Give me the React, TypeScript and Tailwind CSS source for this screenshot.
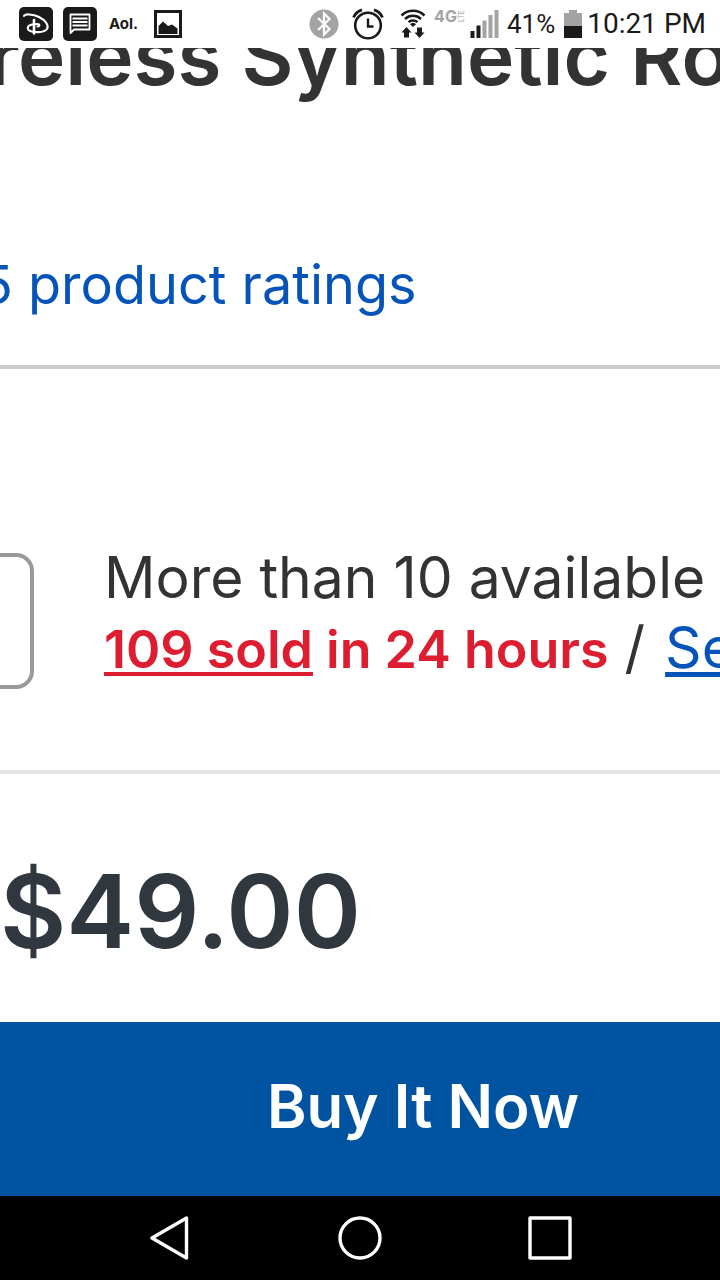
import React from 'react';

interface IconProps {
  className?: string;
}

const DisneyIcon: React.FC<IconProps> = ({ className }) => (
  <svg viewBox="0 0 34 34" className={className} aria-label="Disney">
    <rect width="34" height="34" rx="5" fill="#1a1a1a" />
    <g fill="none" stroke="#fff" strokeLinecap="round">
      <path d="M5 9C5 6.5 14 7 20 10C27 13.5 30 18.5 28 22C25.5 26 13 26 9.5 23C7 19.5 11 17 18 17C21 17 21 19 18.5 19.5" strokeWidth="2.1" />
      <path d="M15 13V26.5" strokeWidth="2.6" />
    </g>
  </svg>
);

const MessageIcon: React.FC<IconProps> = ({ className }) => (
  <svg viewBox="0 0 34 34" className={className} aria-label="Messages">
    <rect width="34" height="34" rx="5" fill="#1a1a1a" />
    <path d="M7.5 7.5H26.5V22.5H11L7.5 26Z" fill="none" stroke="#fff" strokeWidth="1.8" strokeLinejoin="round" />
    <path d="M9.5 11.5H24.5M9.5 15H24.5M9.5 18.5H24.5" stroke="#fff" strokeWidth="1.8" />
  </svg>
);

const PictureIcon: React.FC<IconProps> = ({ className }) => (
  <svg viewBox="0 0 28 28" className={className} aria-label="Screenshot saved">
    <rect x="1.5" y="1.5" width="25" height="25" fill="#fff" stroke="#1a1a1a" strokeWidth="3" />
    <path d="M4.5 24V16L9 11.5L14 16L18 14.5L23.5 18.5V24Z" fill="#1a1a1a" />
  </svg>
);

const BluetoothIcon: React.FC<IconProps> = ({ className }) => (
  <svg viewBox="0 0 30 30" className={className} aria-label="Bluetooth">
    <circle cx="15" cy="15" r="14.5" fill="#a3a3a3" />
    <path d="M9 9L20.5 20L15 25.5V4.5L20.5 10L9 21" fill="none" stroke="#fff" strokeWidth="2.2" />
  </svg>
);

const AlarmIcon: React.FC<IconProps> = ({ className }) => (
  <svg viewBox="0 0 32 32" className={className} aria-label="Alarm">
    <g fill="none" stroke="#1a1a1a">
      <circle cx="16" cy="17.5" r="12.8" strokeWidth="2.6" />
      <path d="M16 10.5V18.5H21.5" strokeWidth="2.4" />
      <path d="M1.5 9.5C3 6 6 3 10 1.8M30.5 9.5C29 6 26 3 22 1.8" strokeWidth="2.8" />
    </g>
  </svg>
);

const WifiIcon: React.FC<IconProps> = ({ className }) => (
  <svg viewBox="0 0 26 30" className={className} aria-label="Wi-Fi">
    <g fill="none" stroke="#1a1a1a" strokeWidth="2.5">
      <path d="M1.5 6.5C8 .3 18 .3 24.5 6.5" />
      <path d="M5 10C9.5 5.8 16.5 5.8 21 10" />
      <path d="M8.5 13.2C11 10.8 15 10.8 17.5 13.2" />
    </g>
    <path d="M10 15.2C11.5 13.6 14.5 13.6 16 15.2L13 18Z" fill="#1a1a1a" />
    <path d="M6.5 18L11.5 23.5H9V28.5H4V23.5H1.5ZM19.5 29L14.5 23.5H17V18.5H22V23.5H24.5Z" fill="#1a1a1a" />
  </svg>
);

const SignalIcon: React.FC<IconProps> = ({ className }) => (
  <svg viewBox="0 0 30 28" className={className} aria-label="Signal">
    <path d="M.5 21H4.5V28H.5ZM6.5 15.5H10.5V28H6.5Z" fill="#1a1a1a" />
    <path d="M12.5 10.5H16.5V28H12.5ZM18.5 5H22.5V28H18.5ZM24.5 0H28.5V28H24.5Z" fill="#a3a3a3" />
  </svg>
);

const BatteryIcon: React.FC<IconProps> = ({ className }) => (
  <svg viewBox="0 0 20 28" className={className} aria-label="Battery">
    <path d="M6 0H14V3H19V16H1V3H6Z" fill="#a3a3a3" />
    <path d="M1 16H19V28H1Z" fill="#1a1a1a" />
  </svg>
);

const StatusBar: React.FC = () => (
  <header className="flex h-12 shrink-0 items-center bg-white pr-[14px] pl-[19px] font-[Roboto,sans-serif] text-[#1a1a1a]">
    <DisneyIcon className="h-[34px] w-[34px]" />
    <MessageIcon className="ml-[10px] h-[34px] w-[34px]" />
    <span className="ml-3 font-[Inter,sans-serif] text-[15px] leading-5 font-bold">Aol.</span>
    <PictureIcon className="ml-4 h-7 w-7" />
    <div className="ml-auto flex items-center">
      <BluetoothIcon className="h-[30px] w-[30px]" />
      <AlarmIcon className="ml-[13px] h-8 w-8" />
      <WifiIcon className="ml-4 h-[30px] w-[26px]" />
      <span className="mb-4 ml-2 flex items-center font-[Inter,sans-serif] text-[#a3a3a3]">
        <span className="text-[16px] leading-4 font-bold">4G</span>
        <span className="rotate-180 text-[7px] leading-[9px] [writing-mode:vertical-rl]">LTE</span>
      </span>
      <SignalIcon className="ml-1 h-7 w-[30px]" />
      <span className="ml-[7px] text-[26px] leading-8">41%</span>
      <BatteryIcon className="ml-2 h-7 w-5" />
      <span className="ml-1 text-[28px] leading-8">10:21 PM</span>
    </div>
  </header>
);

const NavBar: React.FC = () => (
  <nav className="grid h-[84px] shrink-0 grid-cols-3 bg-black px-[75px]">
    <button type="button" aria-label="Back" className="flex items-center justify-center">
      <svg viewBox="0 0 44 44" className="h-11 w-11" fill="none" stroke="#fff" strokeWidth="3.4" strokeLinejoin="round">
        <path d="M38.5 2V42L4 22Z" />
      </svg>
    </button>
    <button type="button" aria-label="Home" className="flex items-center justify-center">
      <svg viewBox="0 0 44 44" className="h-11 w-11" fill="none" stroke="#fff" strokeWidth="3.4">
        <circle cx="22" cy="22" r="20" />
      </svg>
    </button>
    <button type="button" aria-label="Recent apps" className="flex items-center justify-center">
      <svg viewBox="0 0 44 44" className="h-11 w-11" fill="none" stroke="#fff" strokeWidth="3.4" strokeLinejoin="round">
        <rect x="2" y="2" width="40" height="40" />
      </svg>
    </button>
  </nav>
);

export default function App() {
  return (
    <div className="flex min-h-screen flex-col bg-white font-[Inter,sans-serif] text-[#333]">
      <StatusBar />
      {/* Zoomed-in listing, cut off on both sides */}
      <main className="flex flex-1 flex-col overflow-hidden whitespace-nowrap">
        <section className="border-b-4 border-[#ccc] pb-12">
          <h1 className="-mt-7 -ml-3 text-[80px] leading-[72px] font-semibold">reless Synthetic Ro</h1>
          <a href="#ratings" className="mt-[161px] -ml-5 block text-[54px] leading-[64px] text-[#0654ba]">
            5 product ratings
          </a>
        </section>

        <section className="flex items-start border-b-4 border-[#e5e5e5] pt-[174px] pb-[81px]">
          <input
            type="text"
            aria-label="Quantity"
            className="mt-[10px] -ml-16 h-[136px] w-[98px] shrink-0 rounded-[18px] border-4 border-[#999] bg-white"
          />
          <div className="ml-[70px] text-[57px] leading-[70px]">
            <p>More than 10 available</p>
            <p>
              <span className="text-[52px] font-semibold text-[#dd1e31]">
                <a href="#sold" className="underline decoration-[4px] underline-offset-[4px] [text-decoration-skip-ink:none]">109 sold</a> in 24 hours
              </span>{' '}
              <span className="mr-1">/</span>{' '}
              <a href="#similar" className="text-[#0654ba] underline decoration-[5px] underline-offset-[4px] [text-decoration-skip-ink:none]">Se</a>
            </p>
          </div>
        </section>

        <p className="pt-[73px] pb-[47px] text-[102px] leading-[128px] font-semibold text-[#30373f]">$49.00</p>

        <button type="button" className="h-[174px] w-full bg-[#0053a0] pb-[6px] pl-[126px] text-[60px] font-semibold text-white">
          Buy It Now
        </button>
      </main>
      <NavBar />
    </div>
  );
}
